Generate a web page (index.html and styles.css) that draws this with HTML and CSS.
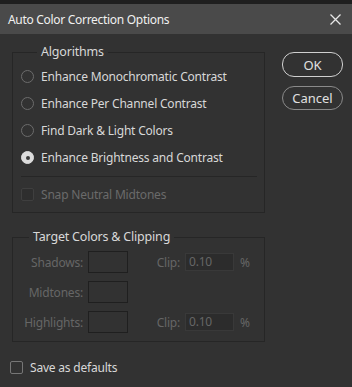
FILE: index.html
```html
<!DOCTYPE html>
<html>
<head>
    <meta name='viewport' content='width=device-width, initial-scale=1'>
    <link rel="stylesheet" href="styles.css">
</head>
<body>
<div class="topstrip"></div>
<div class="titlebar">
    <span class="title">Auto Color Correction Options</span>
    <svg class="close" width="11" height="11" viewBox="0 0 11 11">
        <path d="M0.5 0.5 L10.5 10.5 M10.5 0.5 L0.5 10.5" stroke="#e8e8e8" stroke-width="1.3"/>
    </svg>
</div>

<div class="dialog">
    <div class="main">
        <fieldset class="group">
            <legend>Algorithms</legend>
            <label class="row"><span class="radio"></span>Enhance Monochromatic Contrast</label>
            <label class="row"><span class="radio"></span>Enhance Per Channel Contrast</label>
            <label class="row"><span class="radio"></span>Find Dark &amp; Light Colors</label>
            <label class="row"><span class="radio checked"></span>Enhance Brightness and Contrast</label>
            <div class="sep"></div>
            <label class="row disabled"><span class="check dim"></span>Snap Neutral Midtones</label>
        </fieldset>

        <fieldset class="group target">
            <legend>Target Colors &amp; Clipping</legend>
            <div class="trow">
                <span class="tlabel">Shadows:</span>
                <span class="swatch"></span>
                <span class="clip">Clip:</span>
                <span class="field">0.10</span>
                <span class="pct">%</span>
            </div>
            <div class="trow">
                <span class="tlabel">Midtones:</span>
                <span class="swatch"></span>
            </div>
            <div class="trow">
                <span class="tlabel">Highlights:</span>
                <span class="swatch"></span>
                <span class="clip">Clip:</span>
                <span class="field">0.10</span>
                <span class="pct">%</span>
            </div>
        </fieldset>

        <label class="row save"><span class="check"></span>Save as defaults</label>
    </div>

    <div class="buttons">
        <button class="btn default">OK</button>
        <button class="btn">Cancel</button>
    </div>
</div>
</body>
</html>
```

FILE: styles.css
```css
html, body {
    margin: 0;
    padding: 0;
    background: #323232;
    font-family: 'Noto Sans', 'Open Sans', sans-serif;
    font-size: 12px;
    letter-spacing: -0.2px;
    color: #d8d8d8;
    height: 387px;
    overflow: hidden;
}

.topstrip {
    height: 4px;
    background: #1f1f1f;
}

.titlebar {
    height: 30px;
    background: #4a4a4a;
    display: flex;
    align-items: center;
    justify-content: space-between;
    padding: 0 11px 0 8px;
}

.title {
    color: #f0f0f0;
    font-size: 12px;
    letter-spacing: -0.3px;
}

.dialog {
    display: flex;
    padding: 0 0 0 12px;
}

.main {
    width: 253px;
}

.group {
    margin: 10px 0 0 0;
    padding: 3px 7px 4px 8px;
    border: 1px solid #262626;
    min-width: 0;
}

.group legend {
    margin-left: 16px;
    padding: 0 4px;
    line-height: 16px;
    font-size: 12.5px;
    color: #d8d8d8;
}

.row {
    display: flex;
    align-items: center;
    height: 27px;
}

.radio {
    width: 11px;
    height: 11px;
    border: 1px solid #6c6c6c;
    border-radius: 50%;
    margin-right: 7px;
    box-sizing: content-box;
    position: relative;
}

.radio.checked {
    background: #dcdcdc;
    border-color: #dcdcdc;
}

.radio.checked::after {
    content: '';
    position: absolute;
    left: 3.5px;
    top: 3.5px;
    width: 4px;
    height: 4px;
    border-radius: 50%;
    background: #3a3a3a;
}

.sep {
    height: 1px;
    background: #262626;
    margin: 5px 0 4px 0;
}

.check {
    width: 11px;
    height: 11px;
    border: 1px solid #767676;
    border-radius: 2px;
    margin-right: 7px;
}

.check.dim {
    border-color: #3f3f3f;
    background: #2e2e2e;
}

.disabled {
    color: #6a6a6a;
}

.target {
    margin-top: 16px;
    padding: 2px 0 4px 0;
}

.trow {
    display: flex;
    align-items: center;
    height: 30px;
    color: #666;
}

.tlabel {
    width: 70px;
    text-align: right;
    margin-right: 5px;
}

.swatch {
    width: 38px;
    height: 20px;
    border: 1px solid #1f1f1f;
}

.clip {
    width: 52px;
    text-align: right;
    margin-right: 5px;
}

.field {
    width: 44px;
    height: 16px;
    line-height: 16px;
    padding: 0 0 0 3px;
    background: #2c2c2c;
    border: 1px solid #393939;
    margin-right: 6px;
}

.save {
    margin: 15px 0 0 -2px;
    height: 20px;
}

.buttons {
    display: flex;
    flex-direction: column;
    margin: 18px 0 0 17px;
}

.btn {
    width: 61px;
    height: 24px;
    border-radius: 12px;
    border: 1px solid #8a8a8a;
    background: transparent;
    color: #e0e0e0;
    font-family: 'Noto Sans', 'Open Sans', sans-serif;
    font-size: 13px;
    padding: 0;
    margin-bottom: 9px;
}

.btn.default {
    height: 25px;
    border-color: #d0d0d0;
}
```
